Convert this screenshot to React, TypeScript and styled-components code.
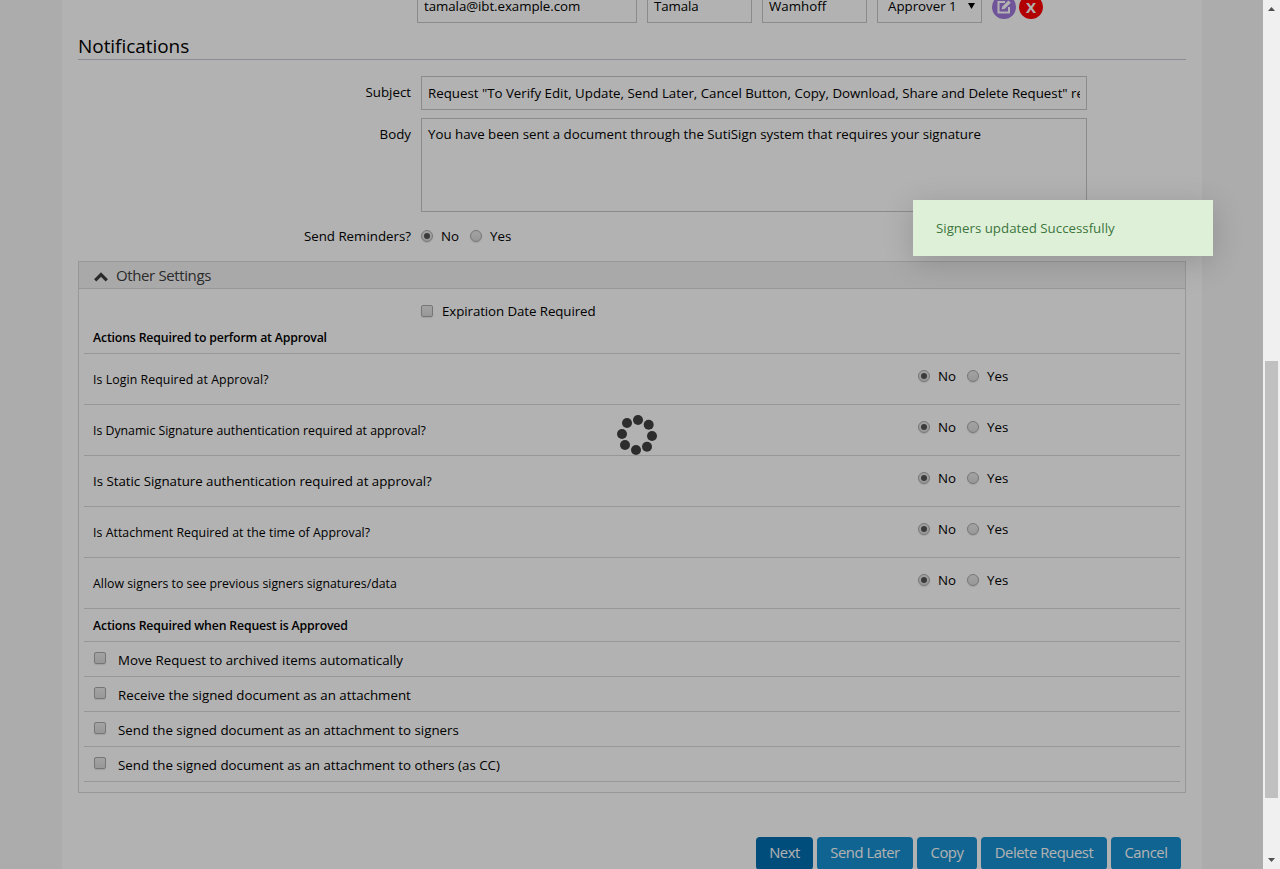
import React from 'react';
import styled, { createGlobalStyle, css } from 'styled-components';

const GlobalStyle = createGlobalStyle`
  *, *::before, *::after { box-sizing: border-box; }
  body {
    margin: 0;
    overflow: hidden;
    background: #f6f6f6;
    color: #000;
    font: 13.3px/20px "Open Sans", "Noto Sans", sans-serif;
  }
`;

const Window = styled.div`
  display: flex;
  height: 869px;
  overflow: hidden;
`;

const Viewport = styled.div`
  position: relative;
  flex: 1;
  display: flex;
  justify-content: center;
  overflow: hidden;
`;

const Sheet = styled.main`
  width: 1140px;
  margin-right: -1px;
  padding: 0 16px;
  height: 869px;
  overflow: hidden;
  background: #fff;
`;

const fieldBox = css`
  border: 1px solid #c8c8c8;
  padding: 6px;
  white-space: nowrap;
`;

const SignerRow = styled.div`
  display: flex;
  align-items: center;
  margin: -11px 0 0 339px;
  height: 34px;
`;

const SignerField = styled.div<{ $width: number; $spacing?: number }>`
  ${fieldBox}
  width: ${(p) => p.$width}px;
  height: 34px;
  margin-right: 10px;
  letter-spacing: ${(p) => p.$spacing ?? 0}px;
`;

const SignerSelect = styled(SignerField)`
  display: flex;
  justify-content: space-between;
  padding-left: 10px;
`;

const SelectArrow = styled.svg`
  margin-top: 7px;
`;

const RoundAction = styled.span<{ $color: string }>`
  display: flex;
  align-items: center;
  justify-content: center;
  width: 24px;
  height: 24px;
  margin: 2px 3px 0 0;
  border-radius: 50%;
  background: ${(p) => p.$color};
  color: #fff;
  font-size: 15px;
  font-weight: 700;
`;

const SectionTitle = styled.h2`
  height: 37px;
  margin: 0;
  padding-top: 9px;
  border-bottom: 1px solid #c7cad5;
  font-size: 19px;
  font-weight: 400;
  line-height: 28px;
  letter-spacing: -0.05px;
`;

const FormRow = styled.div<{ $top: number; $height: number }>`
  display: flex;
  margin-top: ${(p) => p.$top}px;
  height: ${(p) => p.$height}px;
`;

const FormLabel = styled.div`
  width: 333px;
  margin-right: 10px;
  padding-top: 6px;
  text-align: right;
`;

const TextField = styled.div<{ $textTop?: number; $spacing?: number }>`
  ${fieldBox}
  width: 666px;
  padding-top: ${(p) => p.$textTop ?? 6}px;
  letter-spacing: ${(p) => p.$spacing ?? 0}px;
`;

const FieldText = styled.div`
  overflow: hidden;
`;

const Mark = styled.span<{ $round?: boolean }>`
  display: flex;
  align-items: center;
  justify-content: center;
  flex: none;
  width: 12px;
  height: 12px;
  border: 1px solid #a9a9a9;
  border-radius: ${(p) => (p.$round ? '50%' : '2px')};
  background: linear-gradient(#e9e9e9, #dadada);
  box-shadow: 0 1px 1px rgba(0, 0, 0, 0.1);
`;

const Dot = styled.span`
  width: 6px;
  height: 6px;
  border-radius: 50%;
  background: #555;
`;

const ChoiceGroup = styled.div`
  display: flex;
  align-items: center;
  height: 20px;
`;

const ChoiceLabel = styled.span<{ $last?: boolean }>`
  margin: 0 ${(p) => (p.$last ? 0 : 11)}px 0 8px;
  width: ${(p) => (p.$last ? 'auto' : '18px')};
`;

const Panel = styled.section`
  margin-top: 15px;
  height: 532px;
  border: 1px solid #d8d8d8;
`;

const PanelHeader = styled.header`
  display: flex;
  height: 27px;
  padding: 3px 0 0 15px;
  border-bottom: 1px solid #d8d8d8;
  background: #f3f3f3;
  color: #3e3e3e;
  font-size: 15px;
  letter-spacing: -0.38px;

  svg { margin: 7px 8px 0 0; }
`;

const PanelBody = styled.div`
  padding: 0 5px;
`;

const ExpirationRow = styled.div`
  display: flex;
  align-items: center;
  gap: 9px;
  height: 20px;
  margin: 12px 0 0 337px;
  letter-spacing: -0.08px;
`;

const GroupTitle = styled.h3`
  margin: 0;
  padding: 7px 9px 5px;
  border-bottom: 1px solid #d8d8d8;
  font-size: 12.3px;
  font-weight: 600;
  line-height: 20px;
  letter-spacing: -0.17px;
`;

const QuestionRow = styled.div`
  display: flex;
  height: 51px;
  padding: 12px 0 0 9px;
  border-bottom: 1px solid #d8d8d8;
`;

const QuestionText = styled.div<{ $wide?: boolean; $spacing: number }>`
  width: 825px;
  padding-top: ${(p) => (p.$wide ? 3 : 4)}px;
  font-size: ${(p) => (p.$wide ? 13.3 : 12.3)}px;
  letter-spacing: ${(p) => p.$spacing}px;
`;

const OptionRow = styled.div`
  display: flex;
  gap: 12px;
  height: 35px;
  padding: 8px 0 0 10px;
  border-bottom: 1px solid #d8d8d8;

  ${Mark} { margin-top: 2px; }
`;

const ButtonBar = styled.div`
  display: flex;
  justify-content: flex-end;
  gap: 4px;
  padding: 44px 5px 0 0;
`;

const Button = styled.button<{ $primary?: boolean; $width: number }>`
  width: ${(p) => p.$width}px;
  height: 33px;
  padding: 0 0 4px;
  border: 0;
  border-radius: 4px;
  background: ${(p) => (p.$primary ? '#006eb0' : '#1690d2')};
  color: #fff;
  font: 14.8px/20px "Open Sans", sans-serif;
  letter-spacing: -0.45px;
  white-space: nowrap;
`;

const Backdrop = styled.div`
  position: absolute;
  inset: 0;
  background: rgba(0, 0, 0, 0.3);
`;

const Spinner = styled.svg`
  position: absolute;
  left: 616px;
  top: 414px;
`;

const Toast = styled.div`
  position: absolute;
  left: 913px;
  top: 200px;
  width: 300px;
  height: 56px;
  padding: 18px 23px;
  background: #dff0d8;
  color: #3c763d;
  box-shadow: 0 6px 30px rgba(0, 0, 0, 0.17);
`;

const ScrollTrack = styled.aside`
  display: flex;
  flex-direction: column;
  align-items: center;
  width: 17px;
  padding: 7px 0 7px;
  background: #f0f0f0;
`;

const ScrollThumb = styled.div`
  width: 13px;
  height: 437px;
  margin: 350px 0 auto;
  background: #c0c0c0;
`;

const QUESTIONS = [
  { text: 'Is Login Required at Approval?', spacing: 0.08 },
  { text: 'Is Dynamic Signature authentication required at approval?', spacing: 0 },
  { text: 'Is Static Signature authentication required at approval?', wide: true, spacing: -0.02 },
  { text: 'Is Attachment Required at the time of Approval?', spacing: 0.05 },
  { text: 'Allow signers to see previous signers signatures/data', spacing: 0.02 },
];

const OPTIONS = [
  'Move Request to archived items automatically',
  'Receive the signed document as an attachment',
  'Send the signed document as an attachment to signers',
  'Send the signed document as an attachment to others (as CC)',
];

const SPINNER_DOTS = [
  [638, 420], [648.7, 424.7], [652, 436], [647, 446.7],
  [636, 450], [625, 445], [622, 434], [627, 423],
];

const YesNo = () => (
  <ChoiceGroup>
    <Mark $round><Dot /></Mark>
    <ChoiceLabel>No</ChoiceLabel>
    <Mark $round />
    <ChoiceLabel $last>Yes</ChoiceLabel>
  </ChoiceGroup>
);

export default function App() {
  return (
    <Window>
      <GlobalStyle />
      <Viewport>
        <Sheet>
          <SignerRow>
            <SignerField $width={220} $spacing={-0.06}>tamala@ibt.example.com</SignerField>
            <SignerField $width={105} $spacing={-0.1}>Tamala</SignerField>
            <SignerField $width={105}>Wamhoff</SignerField>
            <SignerSelect $width={105}>
              Approver 1
              <SelectArrow width="7" height="6" viewBox="0 0 7 6"><path d="M0 0h7L3.5 6z" /></SelectArrow>
            </SignerSelect>
            <RoundAction $color="#9f79db">
              <svg width="16" height="16" viewBox="0 0 16 16" fill="none" stroke="#fff" strokeWidth="2">
                <path d="M9 3H2.5v10.5H13V8" />
                <path d="M5.6 10.6l.8-3.2 6-6 2.4 2.4-6 6z" fill="#fff" stroke="none" />
              </svg>
            </RoundAction>
            <RoundAction $color="#ff0000">X</RoundAction>
          </SignerRow>

          <SectionTitle>Notifications</SectionTitle>

          <FormRow $top={16} $height={34}>
            <FormLabel>Subject</FormLabel>
            <TextField $spacing={-0.01}>
              <FieldText>Request "To Verify Edit, Update, Send Later, Cancel Button, Copy, Download, Share and Delete Request" re</FieldText>
            </TextField>
          </FormRow>
          <FormRow $top={8} $height={94}>
            <FormLabel>Body</FormLabel>
            <TextField $textTop={5} $spacing={-0.01}>
              You have been sent a document through the SutiSign system that requires your signature
            </TextField>
          </FormRow>
          <FormRow $top={8} $height={26}>
            <FormLabel>Send Reminders?</FormLabel>
            <FormRow $top={6} $height={20}><YesNo /></FormRow>
          </FormRow>

          <Panel>
            <PanelHeader>
              <svg width="14" height="10" viewBox="0 0 14 10" fill="none" stroke="#3e3e3e" strokeWidth="3.2">
                <path d="M1.2 8.4L7 2.6l5.8 5.8" />
              </svg>
              Other Settings
            </PanelHeader>
            <PanelBody>
              <ExpirationRow><Mark />Expiration Date Required</ExpirationRow>
              <GroupTitle>Actions Required to perform at Approval</GroupTitle>
              {QUESTIONS.map((q) => (
                <QuestionRow key={q.text}>
                  <QuestionText $wide={q.wide} $spacing={q.spacing}>{q.text}</QuestionText>
                  <YesNo />
                </QuestionRow>
              ))}
              <GroupTitle>Actions Required when Request is Approved</GroupTitle>
              {OPTIONS.map((text) => (
                <OptionRow key={text}><Mark />{text}</OptionRow>
              ))}
            </PanelBody>
          </Panel>

          <ButtonBar>
            <Button $width={57} $primary>Next</Button>
            <Button $width={96}>Send Later</Button>
            <Button $width={60}>Copy</Button>
            <Button $width={126}>Delete Request</Button>
            <Button $width={70}>Cancel</Button>
          </ButtonBar>
        </Sheet>

        <Backdrop />
        <Spinner width="42" height="42" viewBox="616 414 42 42" fill="#2d2d2d">
          {SPINNER_DOTS.map(([x, y]) => <circle key={`${x}-${y}`} cx={x} cy={y} r="5" />)}
        </Spinner>
        <Toast>Signers updated Successfully</Toast>
      </Viewport>

      <ScrollTrack>
        <svg width="7" height="4" viewBox="0 0 7 4" fill="#505050"><path d="M0 4h7L3.5 0z" /></svg>
        <ScrollThumb />
        <svg width="7" height="4" viewBox="0 0 7 4" fill="#505050"><path d="M0 0h7L3.5 4z" /></svg>
      </ScrollTrack>
    </Window>
  );
}
